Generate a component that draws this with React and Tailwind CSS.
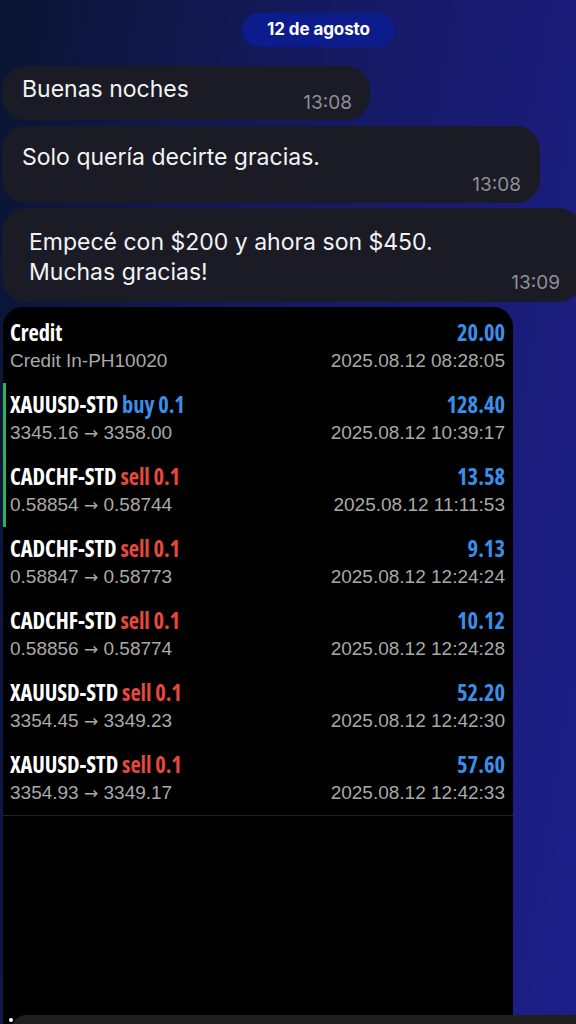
import React from "react";

const chat = { fontFamily: "Inter, 'Noto Sans', sans-serif" };
const narrow = { fontFamily: "'Open Sans', 'DejaVu Sans Condensed', sans-serif" };
const sans = { fontFamily: "'Liberation Sans', Arial, sans-serif" };

const rows = [
  { sym: "XAUUSD-STD", side: "buy", a: "3345.16", b: "3358.00", val: "128.40", time: "2025.08.12 10:39:17", mark: true },
  { sym: "CADCHF-STD", side: "sell", a: "0.58854", b: "0.58744", val: "13.58", time: "2025.08.12 11:11:53", mark: true },
  { sym: "CADCHF-STD", side: "sell", a: "0.58847", b: "0.58773", val: "9.13", time: "2025.08.12 12:24:24" },
  { sym: "CADCHF-STD", side: "sell", a: "0.58856", b: "0.58774", val: "10.12", time: "2025.08.12 12:24:28" },
  { sym: "XAUUSD-STD", side: "sell", a: "3354.45", b: "3349.23", val: "52.20", time: "2025.08.12 12:42:30" },
  { sym: "XAUUSD-STD", side: "sell", a: "3354.93", b: "3349.17", val: "57.60", time: "2025.08.12 12:42:33" },
];

function Row({ title, sub, val, time, mark }) {
  return (
    <div className="flex h-[72px]">
      <div className={`w-[3px] ${mark ? "bg-[#2fb24a]" : ""}`} />
      <div className="flex-1 pl-[4px] pr-[8px] pt-2">
        <div className="flex justify-between items-center h-7">
          <div className="text-[22.5px] font-bold font-stretch-condensed text-white tracking-[-0.1px]" style={narrow}>{title}</div>
          <div className="text-[22.5px] font-bold font-stretch-condensed text-[#3b8ee8]" style={narrow}>{val}</div>
        </div>
        <div className="flex justify-between items-center h-7 text-[19px] text-[#a9a9a9]" style={sans}>
          <div>{sub}</div>
          <div>{time}</div>
        </div>
      </div>
    </div>
  );
}

function Arrow() {
  return <span className="text-[17px]" style={{ fontFamily: "'DejaVu Sans', sans-serif" }}>→</span>;
}

export default function App() {
  return (
    <div className="relative w-[576px] h-[1024px] overflow-hidden bg-[linear-gradient(100deg,#0a1532_0%,#161a66_50%,#1e1e8a_100%)]" style={chat}>
      <div className="flex pt-[13px] pl-[242px]">
        <div className="w-[153px] h-[34px] rounded-full bg-[#0d1c8c] flex items-center justify-center text-white font-bold text-[17px] tracking-[-0.1px]">
          12 de agosto
        </div>
      </div>

      <div className="flex flex-col gap-[6px] pl-[2px] mt-[19px]">
        <div className="w-[368px] h-[54px] rounded-[24px] bg-[#1b1b25] flex items-end justify-between pl-[20px] pr-[18px]">
          <div className="text-[23px] leading-[30px] text-[#f3f3f5] self-start mt-[8px]">Buenas noches</div>
          <div className="text-[19px] text-[#8f8f96] mb-[3px]">13:08</div>
        </div>
        <div className="w-[538px] h-[77px] rounded-[24px] bg-[#1b1b25] flex flex-col pl-[20px] pr-[19px]">
          <div className="text-[23px] text-[#f3f3f5] mt-[16px] leading-[30px]">Solo quería decirte gracias.</div>
          <div className="text-[19px] text-[#8f8f96] self-end mt-[-1px]">13:08</div>
        </div>
        <div className="w-[580px] h-[94px] rounded-[24px] bg-[#1b1b25] flex items-end justify-between pl-[27px] pr-[22px] mt-[-1px]">
          <div className="text-[23px] text-[#f3f3f5] leading-[30px] self-start mt-[19px]">
            Empecé con $200 y ahora son $450.<br />Muchas gracias!
          </div>
          <div className="text-[19px] text-[#8f8f96] mb-[5px]">13:09</div>
        </div>
      </div>

      <div className="ml-[3px] mt-[5px] w-[510px] h-[720px] bg-black rounded-t-[20px] pt-1">
        <Row title="Credit" sub="Credit In-PH10020" val="20.00" time="2025.08.12 08:28:05" />
        {rows.map((r, i) => (
          <Row
            key={i}
            mark={r.mark}
            title={
              <span>
                {r.sym}{" "}
                <span className={r.side === "buy" ? "text-[#3b8ee8]" : "text-[#e5483d]"}>{r.side} 0.1</span>
              </span>
            }
            sub={<span>{r.a} <Arrow /> {r.b}</span>}
            val={r.val}
            time={r.time}
          />
        ))}
        <div className="h-px bg-[#22232c]" />
      </div>

      <div className="absolute left-[12px] right-0 top-[1015px] h-[20px] rounded-tl-[14px] bg-[#1f1f1f]" />
      <div className="absolute left-[9px] top-[1018px] w-[4px] h-[4px] rounded-full bg-white" />
    </div>
  );
}
